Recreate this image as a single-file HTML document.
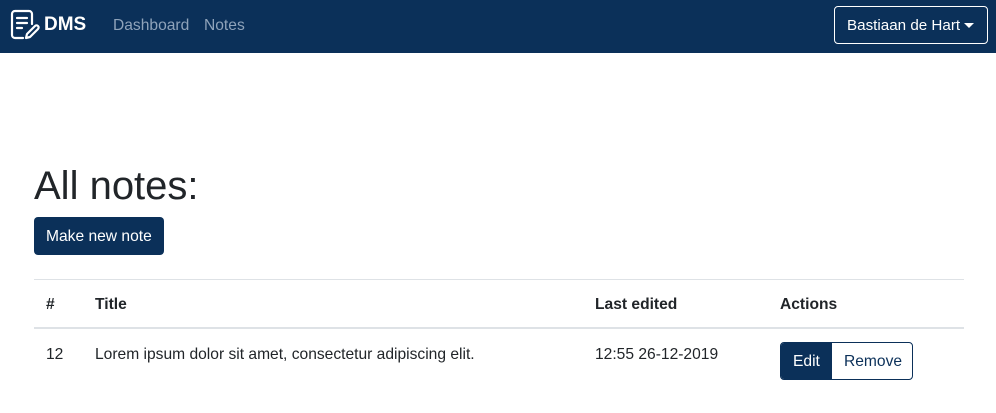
<!DOCTYPE html>
<html><head><style>
*{box-sizing:border-box}
body{margin:0;width:996px;height:413px;background:#fff;font-family:"Liberation Sans",sans-serif;color:#212529;position:relative;overflow:hidden}
.nav{position:absolute;left:0;top:0;width:996px;height:53px;background:#0b3059}
.brand{position:absolute;left:44px;top:14px;color:#fff;font-weight:bold;font-size:19px}
.link{position:absolute;top:17px;font-size:15.6px;color:#8fa3ba}
.user{position:absolute;left:834px;top:6px;width:154px;height:38px;border:1px solid #fff;border-radius:4px;color:#fff;font-size:15.2px;padding:10px 0 0 12px}
.user:after{content:"";position:absolute;right:13px;top:16px;border-left:5px solid transparent;border-right:5px solid transparent;border-top:5px solid #fff}
h1{position:absolute;left:34px;top:164px;margin:0;font-size:40px;font-weight:500}
.btn{position:absolute;left:34px;top:217px;width:130px;height:38px;background:#0b3059;color:#fff;border-radius:4px;font-size:15.6px;padding:11px 0 0 12px}
.hr{position:absolute;left:34px;width:930px;height:1px;background:#dee2e6}
.t{position:absolute;font-size:15.6px}
.b{font-weight:bold}
.grp{position:absolute;left:780px;top:342px;width:133px;height:38px;border:1px solid #0b3059;border-radius:4px;overflow:hidden;font-size:15.6px}
.grp .e{position:absolute;left:0;top:0;width:51px;height:38px;background:#0b3059;color:#fff;padding:10px 0 0 12px}
.grp .r{position:absolute;left:63px;top:10px;color:#0b3059}
</style></head><body>
<div class="nav">
<svg style="position:absolute;left:10px;top:9px" width="30" height="32" viewBox="0 0 30 32" fill="none" stroke="#fff" stroke-width="2.2" stroke-linecap="round" stroke-linejoin="round">
<path d="M13 29H5a3 3 0 0 1-3-3V5a3 3 0 0 1 3-3h14a3 3 0 0 1 3 3v10"/>
<path d="M7 9h10M7 14h10M7 19h5"/>
<path d="M16 29l1-4 8-8a2 2 0 0 1 3 3l-8 8z"/>
</svg>
<div class="brand">DMS</div>
<div class="link" style="left:113px">Dashboard</div>
<div class="link" style="left:204px">Notes</div>
<div class="user">Bastiaan de Hart</div>
</div>
<h1>All notes:</h1>
<div class="btn">Make new note</div>
<div class="hr" style="top:279px"></div>
<div class="t b" style="left:46px;top:296px">#</div>
<div class="t b" style="left:95px;top:296px">Title</div>
<div class="t b" style="left:595px;top:296px">Last edited</div>
<div class="t b" style="left:780px;top:296px">Actions</div>
<div class="hr" style="top:327px;height:2px"></div>
<div class="t" style="left:46px;top:346px">12</div>
<div class="t" style="left:95px;top:346px">Lorem ipsum dolor sit amet, consectetur adipiscing elit.</div>
<div class="t" style="left:595px;top:346px">12:55 26-12-2019</div>
<div class="grp"><div class="e">Edit</div><div class="r">Remove</div></div>
</body></html>
